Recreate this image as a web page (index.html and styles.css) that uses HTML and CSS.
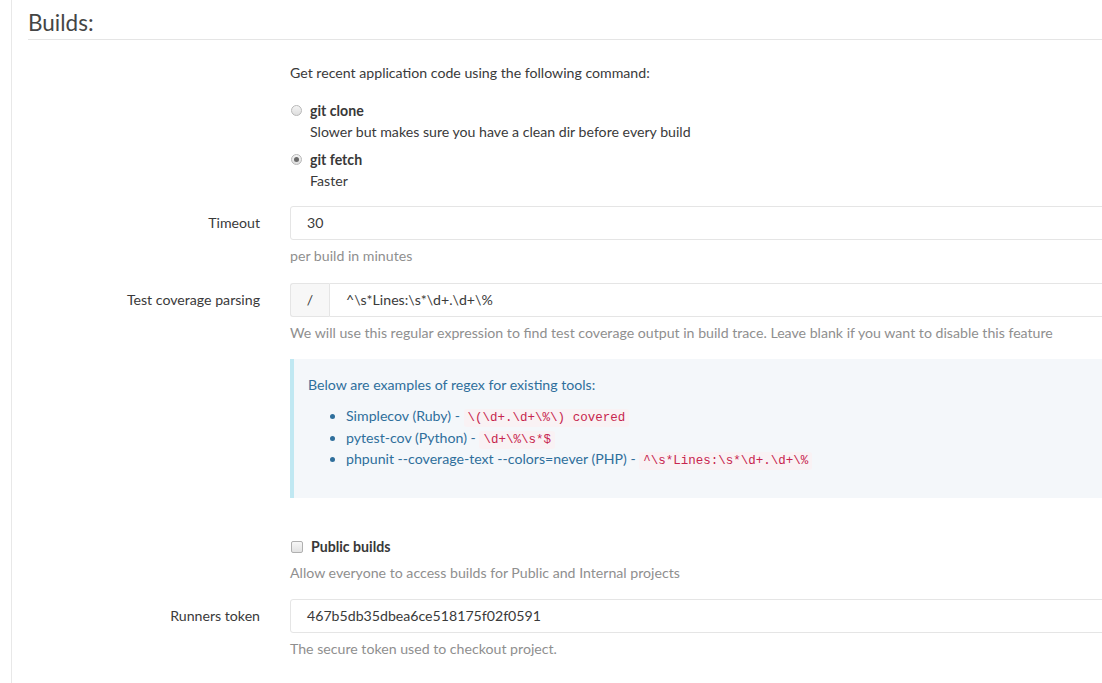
FILE: index.html
```html
<!DOCTYPE html>
<html>
<head>
<meta charset="utf-8">
<link rel="stylesheet" href="styles.css">
</head>
<body>
<div class="page">
  <h3 class="section-title">Builds:</h3>

  <div class="row row-cmd">
    <div class="label"></div>
    <div class="field">
      <p class="intro">Get recent application code using the following command:</p>
      <div class="radio">
        <span class="radio-input"></span>
        <div>
          <div class="opt-title">git clone</div>
          <div class="opt-desc">Slower but makes sure you have a clean dir before every build</div>
        </div>
      </div>
      <div class="radio">
        <span class="radio-input checked"></span>
        <div>
          <div class="opt-title">git fetch</div>
          <div class="opt-desc">Faster</div>
        </div>
      </div>
    </div>
  </div>

  <div class="row row-timeout">
    <div class="label">Timeout</div>
    <div class="field">
      <div class="input">30</div>
      <div class="help">per build in minutes</div>
    </div>
  </div>

  <div class="row row-coverage">
    <div class="label">Test coverage parsing</div>
    <div class="field">
      <div class="input-group">
        <span class="addon">/</span>
        <div class="input grow">^\s*Lines:\s*\d+.\d+\%</div>
      </div>
      <div class="help">We will use this regular expression to find test coverage output in build trace. Leave blank if you want to disable this feature</div>
      <div class="callout">
        <p>Below are examples of regex for existing tools:</p>
        <ul>
          <li>Simplecov (Ruby) - <code>\(\d+.\d+\%\) covered</code></li>
          <li>pytest-cov (Python) - <code>\d+\%\s*$</code></li>
          <li>phpunit --coverage-text --colors=never (PHP) - <code>^\s*Lines:\s*\d+.\d+\%</code></li>
        </ul>
      </div>
    </div>
  </div>

  <div class="row row-public">
    <div class="label"></div>
    <div class="field">
      <div class="checkbox">
        <span class="check-input"></span>
        <span class="opt-title">Public builds</span>
      </div>
      <div class="help">Allow everyone to access builds for Public and Internal projects</div>
    </div>
  </div>

  <div class="row row-token">
    <div class="label">Runners token</div>
    <div class="field">
      <div class="input">467b5db35dbea6ce518175f02f0591</div>
      <div class="help">The secure token used to checkout project.</div>
    </div>
  </div>
</div>
</body>
</html>
```

FILE: styles.css
```css
html, body {
  margin: 0;
  padding: 0;
  overflow: hidden;
  background: #fff;
}
body {
  font-family: "Lato", "Noto Sans", sans-serif;
  font-size: 14.15px;
  line-height: 21px;
  color: #3a3a3a;
  width: 1102px;
  height: 683px;
}
.page {
  margin-left: 11px;
  border-left: 1px solid #e8e8e8;
  padding-left: 16px;
  width: 1300px;
  height: 683px;
  box-sizing: border-box;
}
.section-title {
  margin: 0;
  padding-top: 7px;
  font-size: 22.5px;
  font-weight: 400;
  line-height: 32px;
  color: #454545;
  border-bottom: 1px solid #e5e5e5;
  height: 32px;
}
.row {
  display: grid;
  grid-template-columns: 232px 900px;
  column-gap: 30px;
}
.label {
  text-align: right;
  line-height: 34px;
  color: #3a3a3a;
}
.row-cmd { margin-top: 22px; }
.intro { margin: 0 0 17px 0; }
.radio {
  display: flex;
  gap: 8px;
  margin-bottom: 7px;
}
.radio-input {
  width: 11px;
  height: 11px;
  border-radius: 50%;
  border: 1px solid #b8b8b8;
  background: linear-gradient(#f4f4f4, #dedede);
  box-sizing: border-box;
  margin: 5px 0 0 1px;
  position: relative;
  flex: none;
}
.radio-input.checked::after {
  content: "";
  position: absolute;
  left: 2px;
  top: 2px;
  width: 5px;
  height: 5px;
  border-radius: 50%;
  background: #6a6a6a;
}
.opt-title { font-weight: 700; color: #383838; }
.opt-desc { color: #3a3a3a; }

.row-timeout { margin-top: 8px; }
.input {
  height: 34px;
  box-sizing: border-box;
  border: 1px solid #e5e5e5;
  border-radius: 3px;
  padding: 6px 16px;
  line-height: 20px;
  color: #3a3a3a;
  background: #fff;
}
.help {
  color: #8f8f8f;
  margin-top: 5px;
  line-height: 21px;
}
.row-coverage { margin-top: 17px; }
.input-group {
  display: flex;
}
.addon {
  width: 39px;
  height: 34px;
  box-sizing: border-box;
  border: 1px solid #e5e5e5;
  border-right: 0;
  border-radius: 3px 0 0 3px;
  background: #f7f7f7;
  text-align: center;
  line-height: 32px;
  flex: none;
}
.input.grow {
  flex: 1;
  border-radius: 0 3px 3px 0;
}
.callout {
  margin-top: 16px;
  background: #f4f7fa;
  border-left: 4px solid #c0e8f2;
  padding: 15px 16px 17px 14px;
  color: #2f6f9c;
  height: 139px;
  box-sizing: border-box;
}
.callout p { margin: 0 0 10px 0; }
.callout ul {
  margin: 0;
  padding-left: 38px;
}
.callout li { line-height: 21.5px; }
code {
  font-family: "Liberation Mono", "DejaVu Sans Mono", monospace;
  font-size: 12.5px;
  line-height: 1;
  color: #c7254e;
  background: #f9f2f4;
  padding: 2px 4px;
  border-radius: 3px;
}
.row-public { margin-top: 38px; }
.checkbox {
  display: flex;
  align-items: center;
  gap: 8px;
}
.check-input {
  width: 12px;
  height: 12px;
  border: 1px solid #b0b0b0;
  border-radius: 2px;
  background: linear-gradient(#f7f7f7, #e2e2e2);
  box-sizing: border-box;
  margin-left: 1px;
  flex: none;
}
.row-public .help { margin-top: 5px; }
.row-token { margin-top: 16px; }
```
